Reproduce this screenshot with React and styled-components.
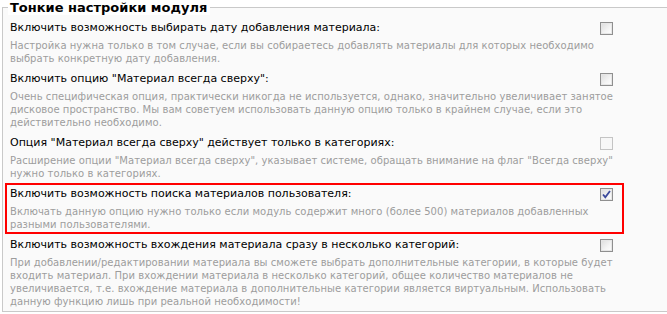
import styled, { createGlobalStyle, css } from 'styled-components';

const GlobalStyle = createGlobalStyle`
  html, body {
    margin: 0;
    padding: 0;
    background: #ffffff;
  }
  body {
    font-family: 'DejaVu Sans', Verdana, sans-serif;
  }
`;

const Fieldset = styled.fieldset`
  margin: 0 0 0 2px;
  padding: 0 0 0 2px;
  border: 1px solid #c9c9c9;
  border-right: none;
  background: #fafafa;
  min-width: 0;
`;

const Legend = styled.legend`
  margin: 0 0 2px 3px;
  padding: 0 3px 0 2px;
  font-size: 13px;
  font-weight: bold;
  line-height: 15px;
  color: #000;
  background: #ffffff;
`;

const Row = styled.div`
  width: 619px;
  box-sizing: border-box;
  display: grid;
  grid-template-columns: 1fr 13px;
  column-gap: 11px;
  padding: 0 9px 1px 3px;
  border: 2px solid ${p => (p.$active ? '#ff0000' : 'transparent')};
`;

const Text = styled.div`
  min-width: 0;
`;

const Label = styled.div`
  font-size: 11px;
  line-height: 18px;
  color: #000;
  white-space: nowrap;
  letter-spacing: 0;
`;

const Hint = styled.div`
  margin-top: 2px;
  font-size: 10px;
  line-height: 13px;
  color: #9d9d9d;
  white-space: nowrap;
  letter-spacing: 0.05px;
`;

const Box = styled.span`
  margin-top: 3px;
  width: 13px;
  height: 13px;
  box-sizing: border-box;
  display: flex;
  align-items: center;
  justify-content: center;
  border: 1px solid #8f8f8f;
  background: linear-gradient(135deg, #dcdcdc 0%, #f4f4f4 60%, #ffffff 100%);
  box-shadow: inset 0 0 0 1px #e6e6e6;
  ${p =>
    p.$disabled &&
    css`
      border-color: #c4c4c4;
      background: #f7f7f7;
      box-shadow: none;
    `}
`;

const Check = () => (
  <svg width="9" height="9" viewBox="0 0 9 9">
    <path d="M1 4.5 L3.3 7.2 L8 1" fill="none" stroke="#3b4a9c" strokeWidth="1.8" />
  </svg>
);

const options = [
  {
    label: 'Включить возможность выбирать дату добавления материала:',
    hint: [
      'Настройка нужна только в том случае, если вы собираетесь добавлять материалы для которых необходимо',
      'выбрать конкретную дату добавления.',
    ],
  },
  {
    label: 'Включить опцию "Материал всегда сверху":',
    hint: [
      'Очень специфическая опция, практически никогда не используется, однако, значительно увеличивает занятое',
      'дисковое пространство. Мы вам советуем использовать данную опцию только в крайнем случае, если это',
      'действительно необходимо.',
    ],
  },
  {
    label: 'Опция "Материал всегда сверху" действует только в категориях:',
    hint: [
      'Расширение опции "Материал всегда сверху", указывает системе, обращать внимание на флаг "Всегда сверху"',
      'нужно только в категориях.',
    ],
    disabled: true,
  },
  {
    label: 'Включить возможность поиска материалов пользователя:',
    hint: [
      'Включать данную опцию нужно только если модуль содержит много (более 500) материалов добавленных',
      'разными пользователями.',
    ],
    checked: true,
    active: true,
  },
  {
    label: 'Включить возможность вхождения материала сразу в несколько категорий:',
    hint: [
      'При добавлении/редактировании материала вы сможете выбрать дополнительные категории, в которые будет',
      'входить материал. При вхождении материала в несколько категорий, общее количество материалов не',
      'увеличивается, т.е. вхождение материала в дополнительные категории является виртуальным. Использовать',
      'данную функцию лишь при реальной необходимости!',
    ],
  },
];

export default function App() {
  return (
    <>
      <GlobalStyle />
      <Fieldset>
        <Legend>Тонкие настройки модуля</Legend>
        {options.map(o => (
          <Row key={o.label} $active={o.active}>
            <Text>
              <Label>{o.label}</Label>
              <Hint>
                {o.hint.map((line, i) => (
                  <div key={i}>{line}</div>
                ))}
              </Hint>
            </Text>
            <Box $disabled={o.disabled}>{o.checked && <Check />}</Box>
          </Row>
        ))}
      </Fieldset>
    </>
  );
}
